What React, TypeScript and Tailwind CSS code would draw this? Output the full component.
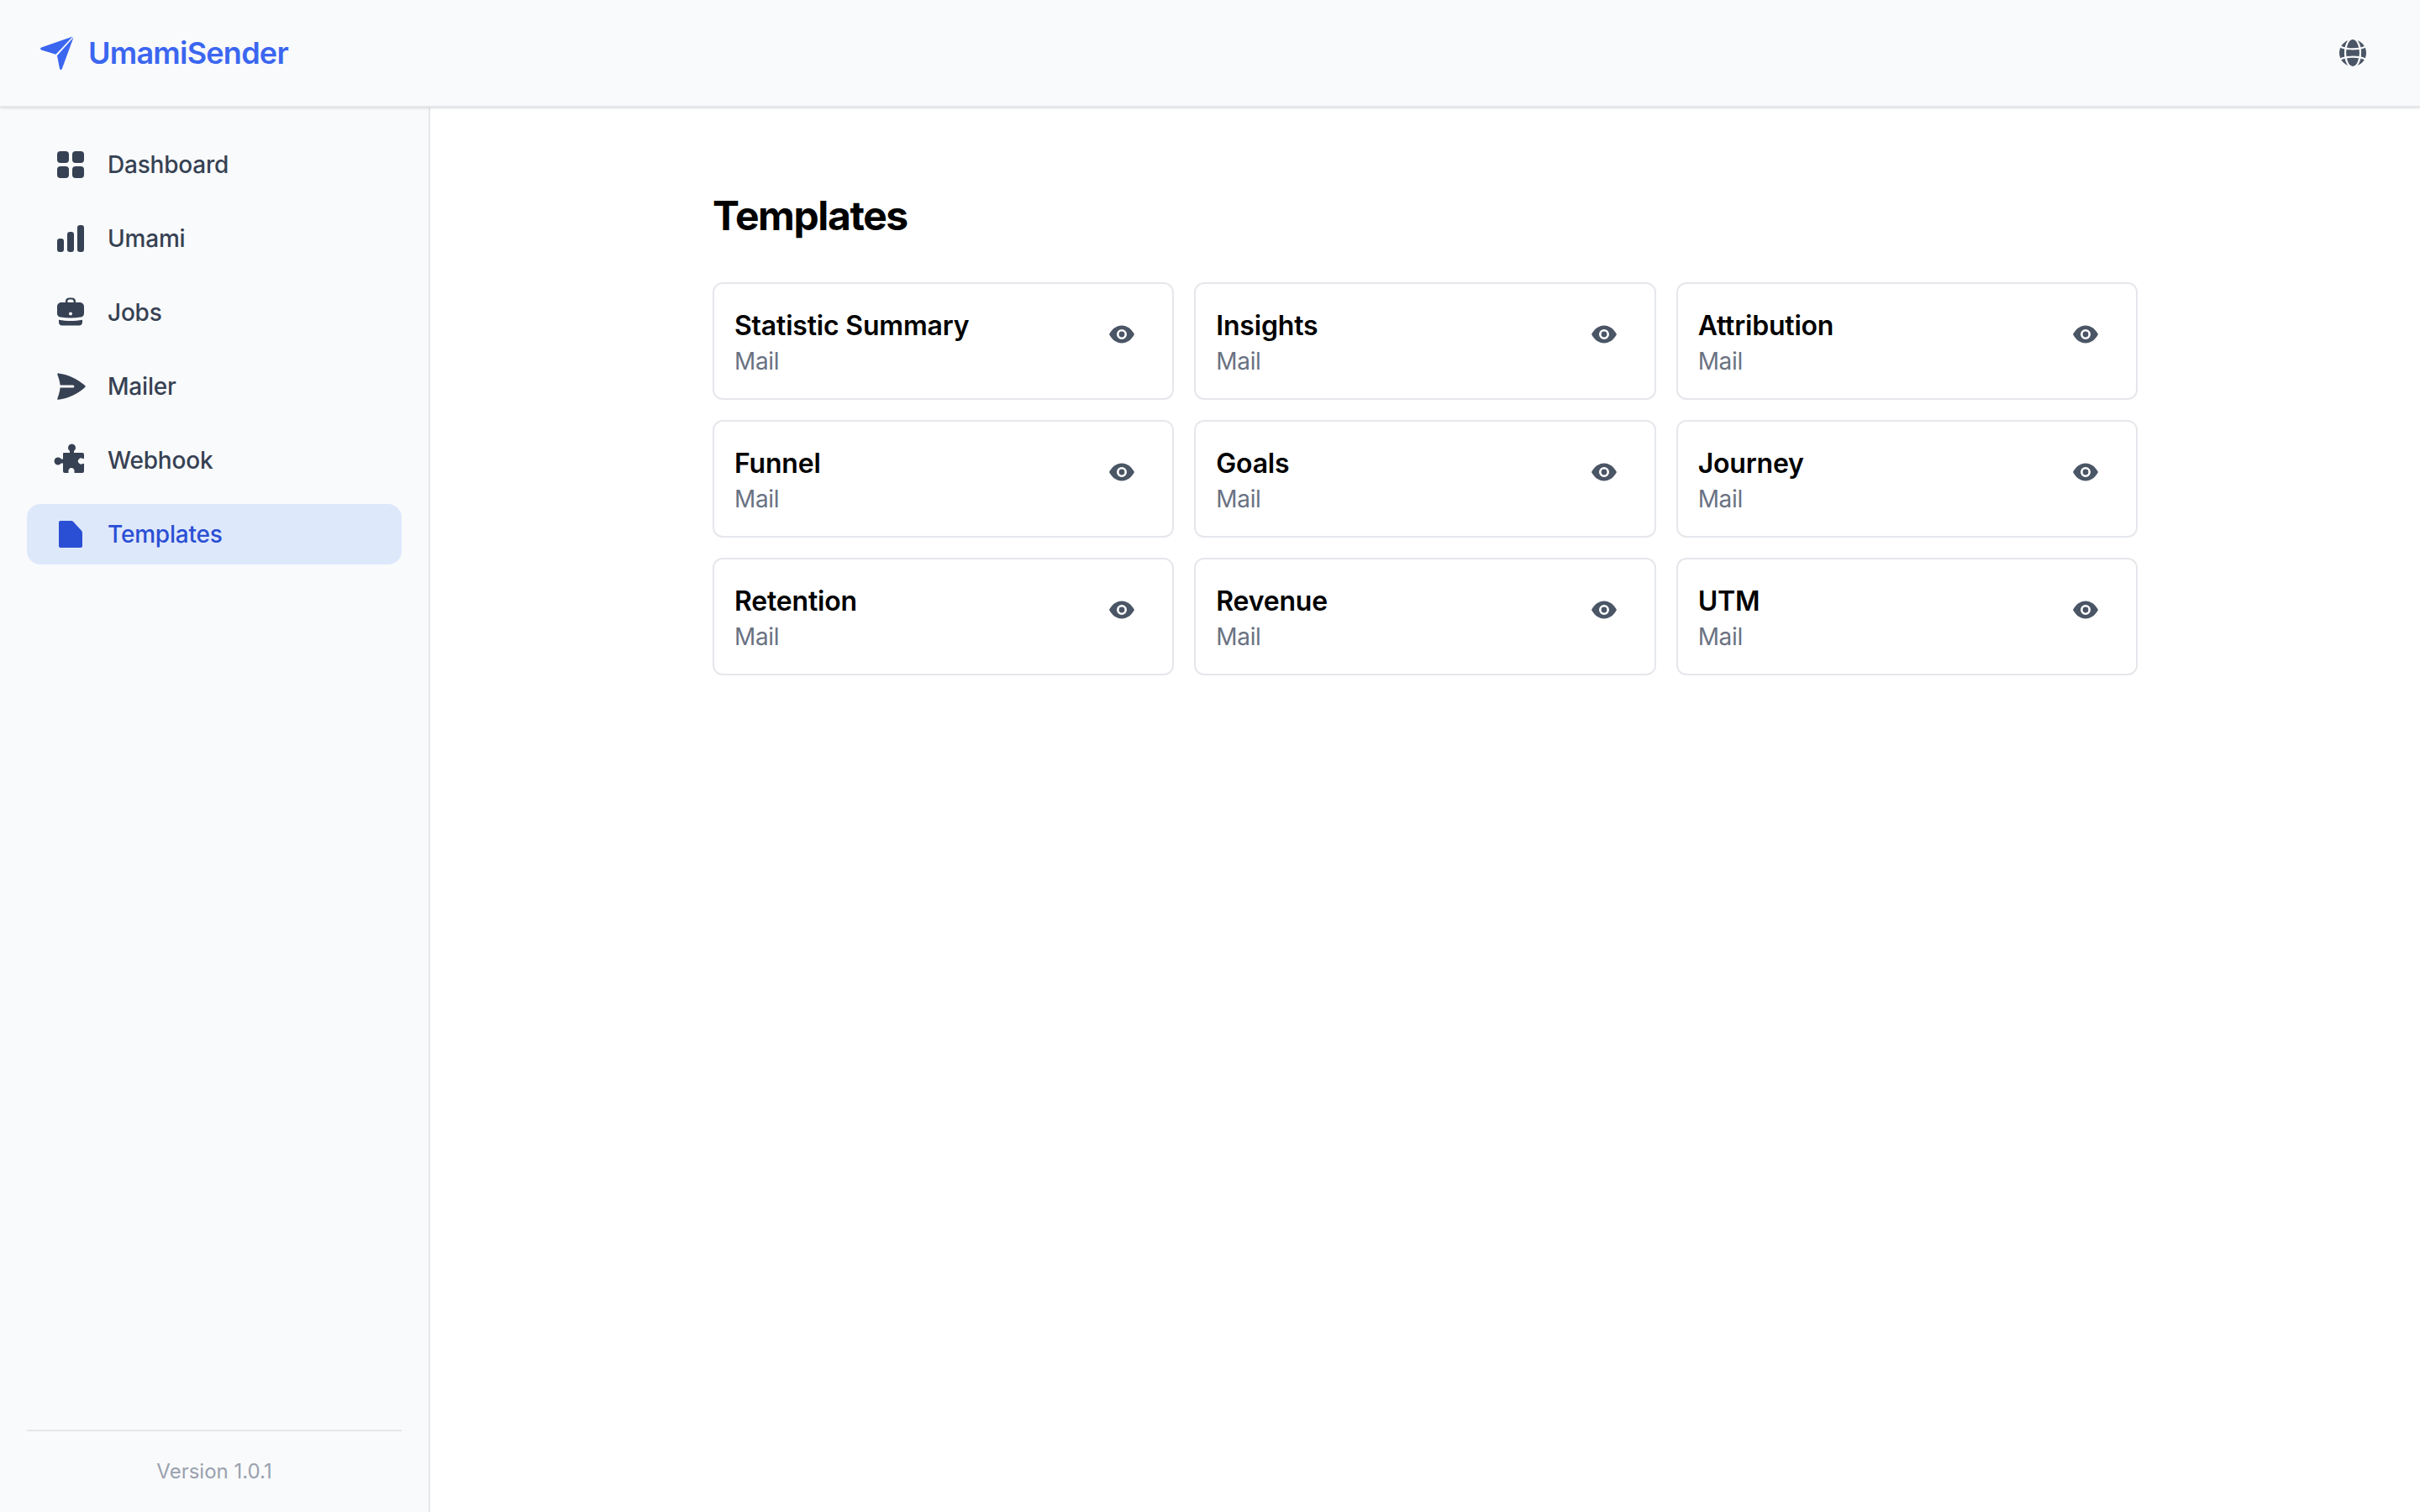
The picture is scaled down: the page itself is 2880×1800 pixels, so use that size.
const navItems = [
   { label: "Dashboard", icon: "grid" },
   { label: "Umami", icon: "bars" },
   { label: "Jobs", icon: "case" },
   { label: "Mailer", icon: "send" },
   { label: "Webhook", icon: "puzzle" },
   { label: "Templates", icon: "file" },
]

const templates = ["Statistic Summary", "Insights", "Attribution", "Funnel", "Goals", "Journey", "Retention", "Revenue", "UTM"]

const NavIcon = ({ name }: { name: string }) => {
   if (name === "puzzle") {
      return (
         <svg viewBox="0 0 48 48" fill="currentColor" className="w-12 h-12 shrink-0">
            <path d="M16 15h7v-2.200a4.500 4.500 0 1 1 5 0V15h10a2 2 0 0 1 2 2v5h-1.500a3.600 3.600 0 1 0 0 6H40v9a2 2 0 0 1-2 2h-9.500v-1.500a3.600 3.600 0 1 0-7 0V39H17a2 2 0 0 1-2-2v-9.500h-2.200a4.500 4.500 0 1 1 0-5H15V16a1 1 0 0 1 1-1Z" />
         </svg>
      )
   }
   return (
      <svg viewBox="0 0 24 24" fill="currentColor" className="w-12 h-12 shrink-0">
         {name === "grid" && (
            <>
               <rect x="4" y="4" width="7" height="7" rx="2" />
               <rect x="13" y="4" width="7" height="7" rx="2" />
               <rect x="4" y="13" width="7" height="7" rx="2" />
               <rect x="13" y="13" width="7" height="7" rx="2" />
            </>
         )}
         {name === "bars" && (
            <>
               <rect x="4" y="12" width="4" height="8" rx="1.600" />
               <rect x="10" y="8" width="4" height="12" rx="1.600" />
               <rect x="16" y="4" width="4" height="16" rx="1.600" />
            </>
         )}
         {name === "case" && (
            <>
               <path fillRule="evenodd" d="M9 6V5.200C9 4 10 3.300 11.200 3.300h1.600C14 3.300 15 4 15 5.200V6h2.500C18.900 6 20 7.100 20 8.500V12.500c0 1.500-.9 2.100-2 2.300-3.800.6-8.200.6-12 0-1.100-.2-2-.8-2-2.300V8.500C4 7.100 5.100 6 6.500 6H9Zm1.200 0h3.600V5.300c0-.6-.5-1.100-1.100-1.100h-1.400c-.6 0-1.100.5-1.100 1.100V6ZM12 11.800a1 1 0 1 0 0 2 1 1 0 0 0 0-2Z" />
               <path d="M5 16.400c4.400.8 9.600.8 14 0V18c0 1-.8 1.700-2 1.700H7c-1.200 0-2-.7-2-1.700v-1.600Z" />
            </>
         )}
         {name === "send" && (
            <path d="M4.800 4.200C4.300 4.100 4 4.500 4.200 5c.7 2 1.400 4 1.600 6.200h7.600a.8.8 0 0 1 0 1.600H5.800c-.2 2.300-.9 4.400-1.600 6.300-.2.500.1.900.6.800 6-.8 11.500-3.500 15.700-7.300.4-.3.4-.9 0-1.200C16.300 7.600 10.800 5 4.800 4.200Z" />
         )}
         {name === "file" && (
            <path d="M6 4h6.300c.5 0 1 .2 1.400.6l4.700 5.200c.4.400.6.900.6 1.400V19c0 .6-.4 1-1 1H6c-.6 0-1-.4-1-1V5c0-.6.4-1 1-1Z" />
         )}
      </svg>
   )
}

const EyeIcon = () => (
   <svg viewBox="0 0 24 24" fill="currentColor" className="w-12 h-12">
      <path fillRule="evenodd" d="M4.500 12C6.200 8.800 8.900 6.750 12 6.750s5.800 2.050 7.500 5.250c-1.700 3.200-4.400 5.250-7.500 5.250S6.200 15.200 4.500 12ZM12 9a3 3 0 1 0 0 6 3 3 0 0 0 0-6Zm0 1.300a1.700 1.700 0 1 1 0 3.400 1.700 1.700 0 0 1 0-3.400Z" />
   </svg>
)

const GlobeIcon = () => (
   <svg viewBox="0 0 32 32" className="w-8 h-8 text-gray-600">
      <circle cx="16" cy="16" r="16" fill="currentColor" />
      <g fill="none" stroke="#f9fafb" strokeWidth="2.200">
         <ellipse cx="16" cy="16" rx="9" ry="17" />
         <path d="M1 8.500c4 2.200 9 2.800 15 2.800s11-.6 15-2.800" />
         <path d="M1 23.500c4-2.200 9-2.800 15-2.800s11 .6 15 2.800" />
      </g>
   </svg>
)

const App = () => {
   return (
      <div className="h-[1800px] w-[2880px] flex flex-col bg-white font-['Inter',sans-serif]">
         <header className="h-[128px] shrink-0 flex items-center justify-between bg-gray-50 border-b-2 border-gray-200 shadow-sm pl-[48px] pr-[64px] z-10">
            <div className="flex items-center gap-[17px]">
               <svg viewBox="0 0 40 40" fill="currentColor" className="w-10 h-10 text-[#3b66f0]">
                  <path d="M38.500 .6 1.200 13.600c-1.500.6-1.500 2.300 0 2.900l17.300 5.200L38.500 .6Z" />
                  <path d="M39.500 1.600 20 23.200l3 15.600c.4 1.500 2.100 1.600 2.800.2L39.500 1.600Z" />
               </svg>
               <span className="text-[36px] leading-[56px] font-semibold tracking-[-0.75px] text-[#3b66f0]">UmamiSender</span>
            </div>
            <GlobeIcon />
         </header>
         <div className="flex flex-1 min-h-0">
            <aside className="w-[512px] shrink-0 flex flex-col bg-gray-50 border-r-2 border-gray-200 px-8 pt-8">
               <nav className="flex flex-col gap-4 flex-1">
                  {navItems.map((item) => {
                     const active = item.label === "Templates"
                     return (
                        <div
                           key={item.label}
                           className={active
                              ? "h-[72px] flex items-center gap-5 pl-7 rounded-2xl bg-[#dee8fb] text-[#2a4fd4]"
                              : "h-[72px] flex items-center gap-5 pl-7 rounded-2xl text-gray-700"}
                        >
                           <NavIcon name={item.icon} />
                           <span className="text-[28px] leading-10 font-medium tracking-[-0.2px]">{item.label}</span>
                        </div>
                     )
                  })}
               </nav>
               <div className="border-t-2 border-gray-200 h-[98px] flex items-center justify-center">
                  <span className="text-2xl text-gray-400">Version 1.0.1</span>
               </div>
            </aside>
            <main className="flex-1 min-w-0">
               <div className="w-[1792px] mx-auto px-12 pt-[96px]">
                  <h1 className="text-[48px] leading-[66px] font-bold tracking-[-1.4px] text-black mb-[46px]">Templates</h1>
                  <div className="grid grid-cols-3 gap-6">
                     {templates.map((name) => (
                        <div key={name} className="h-[140px] flex justify-between border-2 border-gray-200 rounded-xl p-6">
                           <div>
                              <div className="text-[32px] leading-[52px] font-semibold tracking-[-0.2px] text-black">{name}</div>
                              <div className="text-[28px] leading-8 tracking-[-0.35px] text-gray-500">Mail</div>
                           </div>
                           <div className="p-2 mr-1 h-16 mt-1 text-gray-600">
                              <EyeIcon />
                           </div>
                        </div>
                     ))}
                  </div>
               </div>
            </main>
         </div>
      </div>
   )
}

export default App
